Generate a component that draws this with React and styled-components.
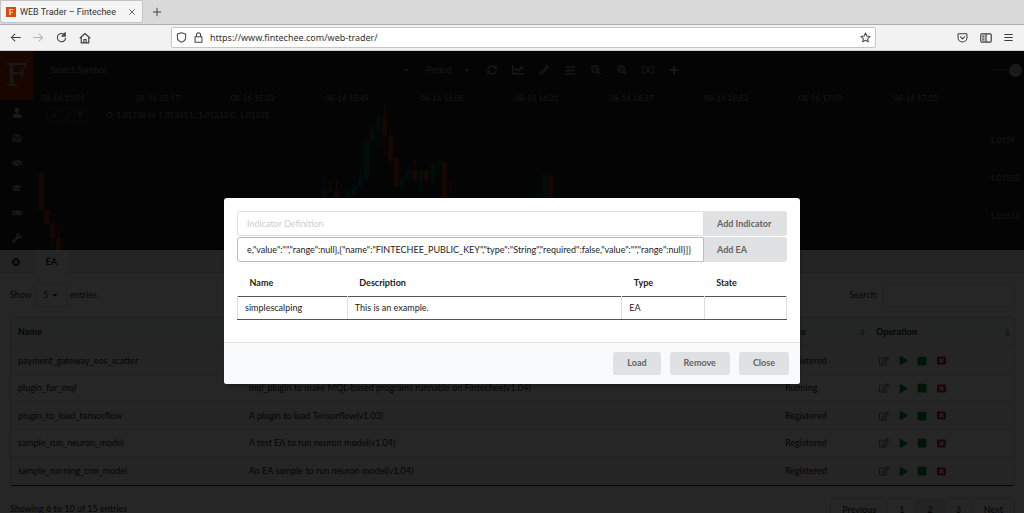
import React from "react";
import styled, { createGlobalStyle } from "styled-components";
import {
  FaUser, FaBalanceScale, FaHandshake, FaGraduationCap, FaGamepad, FaWrench,
  FaChartLine, FaPencilAlt, FaBars, FaSearchMinus, FaSearchPlus,
  FaRegMoneyBillAlt, FaPlus, FaTimesCircle, FaRegEdit, FaPlay, FaStop, FaWindowClose,
  FaSort, FaCaretDown, FaSyncAlt,
} from "react-icons/fa";

const Global = createGlobalStyle`
  *, *::before, *::after { box-sizing: border-box; }
  body { margin: 0; font: 9px/14px Lato, "Liberation Sans", sans-serif; color: #222; }
  button, input, select { font: inherit; color: inherit; margin: 0; }
  button { cursor: pointer; }
  svg { display: block; }
`;

const Screen = styled.div`
  display: flex;
  flex-direction: column;
  height: 100vh;
  overflow: hidden;
`;

/* Browser window */
const TabStrip = styled.div`
  display: flex;
  align-items: center;
  flex: none;
  height: 25px;
  background: #d9d9d9;
  border-bottom: 1px solid #adadad;
  font-family: Roboto, sans-serif;
`;
const BrowserTab = styled.div`
  display: flex;
  align-items: center;
  width: 143px;
  height: 23px;
  margin-bottom: 1px;
  padding: 0 6px 0 5px;
  gap: 4px;
  background: #f4f4f4;
  border: 1px solid #c4c4c4;
  border-radius: 0 0 3px 3px;
  color: #333;
  span { flex: 1; white-space: nowrap; }
`;
const Favicon = styled.i`
  width: 10px;
  height: 10px;
  background: #d94a0c;
  color: #fff;
  font: 9px/10px "Liberation Serif", serif;
  text-align: center;
`;
const ChromeButton = styled.button`
  display: grid;
  place-items: center;
  width: ${(p) => p.$w || 23}px;
  height: 16px;
  padding: 0;
  border: 0;
  background: none;
  color: ${(p) => (p.$faint ? "#b0b0b0" : "#3c3c3c")};
`;
const NavBar = styled.div`
  display: flex;
  align-items: center;
  flex: none;
  height: 26px;
  padding: 0 4px;
  background: #f2f2f2;
  border-bottom: 1px solid #d0d0d0;
`;
const Spacer = styled.div`
  flex: 1;
`;
const UrlBar = styled.div`
  display: flex;
  align-items: center;
  flex: 0 1 705px;
  height: 21px;
  padding: 0 4px;
  gap: 6px;
  background: #fff;
  border: 1px solid #c6c6c6;
  border-radius: 2px;
  color: #444;
  input {
    flex: 1;
    min-width: 0;
    padding: 0;
    border: 0;
    outline: 0;
    color: #333;
    font: 9px/16px "Noto Sans", sans-serif;
  }
`;

/* Trading page */
const Page = styled.main`
  position: relative;
  display: flex;
  flex-direction: column;
  flex: 1;
  min-height: 0;
  overflow: hidden;
  background: #fff;
`;
const Workspace = styled.section`
  display: flex;
  flex: none;
  height: 199px;
  background: #1b1c20;
  color: #a09a94;
`;
const SideNav = styled.nav`
  flex: none;
  width: 33px;
  background: #1b1e22;
`;
const Logo = styled.a`
  display: block;
  height: 49px;
  background: #a82c08;
  color: #a8a098;
  font: 32px/49px "DejaVu Serif", serif;
  text-align: center;
  text-decoration: none;
`;
const SideLink = styled.a`
  display: grid;
  place-items: center;
  height: 25px;
  color: #b0aaa4;
`;
const Desk = styled.div`
  flex: 1;
  min-width: 0;
`;
const ToolBar = styled.div`
  display: flex;
  align-items: center;
  height: 38px;
  padding: 0 2px 0 10px;
`;
const Picker = styled.label`
  display: flex;
  align-items: center;
  flex: ${(p) => p.$flex};
  margin-right: 8px;
  padding-left: 8px;
  select {
    flex: 1;
    appearance: none;
    padding: 0;
    border: 0;
    outline: 0;
    background: transparent;
  }
`;
const Tool = styled.button`
  display: grid;
  place-items: center;
  width: 26px;
  height: 20px;
  padding: 0;
  border: 0;
  background: none;
`;
const Volume = styled.input`
  appearance: none;
  width: 31px;
  height: 13px;
  margin-left: auto;
  background: linear-gradient(#0a4a70, #0a4a70) left center / 100% 2px no-repeat;
  &::-webkit-slider-thumb {
    appearance: none;
    width: 13px;
    height: 13px;
    border-radius: 50%;
    background: #b4b0ac;
  }
`;
const Chart = styled.div`
  position: relative;
  height: 161px;
  font-size: 8px;
  line-height: 10px;
  > svg { position: absolute; inset: 0; width: 100%; height: 100%; }
`;
const TimeAxis = styled.div`
  display: grid;
  grid-template-columns: repeat(10, 1fr);
  padding: 4px 0 4px 8px;
  margin-right: 36px;
`;
const Plot = styled.div`
  display: flex;
  justify-content: space-between;
`;
const Legend = styled.div`
  display: flex;
  align-items: center;
  height: 15px;
  padding-left: 14px;
  gap: 18px;
`;
const LegendTools = styled.div`
  display: flex;
  border: 1px solid #3a3b3f;
  button {
    width: 13px;
    height: 12px;
    padding: 0;
    border: 0;
    background: none;
    line-height: 10px;
  }
  button + button { border-left: 1px solid #3a3b3f; }
`;
const PriceAxis = styled.div`
  display: flex;
  flex-direction: column;
  gap: 28px;
  width: 34px;
  padding-top: 28px;
`;

const Panel = styled.section`
  flex: 1;
  min-height: 0;
  color: #1c1c1c;
`;
const PanelTabs = styled.div`
  display: flex;
  height: 23px;
  background: #eee;
  border-bottom: 1px solid #d0d0d0;
`;
const PanelTab = styled.button`
  display: grid;
  place-items: center;
  width: ${(p) => (p.$active ? 31 : 36)}px;
  height: 23px;
  padding: 0 ${(p) => (p.$active ? 0 : 4)}px 0 0;
  border: 0;
  background: ${(p) => (p.$active ? "#fff" : "transparent")};
  font-weight: 700;
`;
const PanelBody = styled.div`
  padding: 10px 9px 0 10px;
`;
const Controls = styled.div`
  display: flex;
  align-items: center;
  justify-content: space-between;
  margin-bottom: 10px;
  label { display: flex; align-items: center; gap: 2px; }
`;
const LengthBox = styled.span`
  display: flex;
  align-items: center;
  width: 34px;
  height: 24px;
  padding: 0 8px;
  border: 1px solid #ddd;
  border-radius: 3px;
  select {
    flex: 1;
    width: 8px;
    appearance: none;
    padding: 0;
    border: 0;
    background: none;
  }
`;
const SearchInput = styled.input`
  width: 132px;
  height: 24px;
  margin-left: 3px;
  border: 1px solid #ddd;
  border-radius: 3px;
`;
const Programs = styled.table`
  width: 100%;
  table-layout: fixed;
  border-spacing: 0;
  border: 1px solid #d6d6d6;
  border-bottom: 1px solid #222;
  border-radius: 3px;
  th {
    height: 29px;
    padding: 0 7px;
    background: #f0f5f5;
    text-align: left;
    border-bottom: 1px solid #ddd;
  }
  td {
    height: 28px;
    padding: 0 7px;
    border-bottom: 1px solid #e4e4e4;
  }
  tr:nth-child(even) td { height: 27px; }
  tr:nth-child(odd) td { background: #f4f4f4; }
  tr:last-child td { border-bottom: 0; }
`;
const Col = styled.col`
  width: ${(p) => p.$w};
`;
const Heading = styled.span`
  display: flex;
  justify-content: space-between;
  align-items: center;
  svg { color: #a8aaaa; margin-right: -5px; }
`;
const Actions = styled.span`
  display: flex;
  padding-left: 2px;
  gap: 7px;
`;
const Action = styled.button`
  display: grid;
  place-items: center;
  width: 12px;
  height: 12px;
  padding: 0;
  border: 0;
  background: none;
  color: ${(p) => p.$color};
`;
const PanelFoot = styled.div`
  display: flex;
  justify-content: space-between;
  padding-top: 12px;
  line-height: 22px;
`;
const Pager = styled.nav`
  display: flex;
  border: 1px solid #e4e4e4;
  border-radius: 3px;
`;
const PageButton = styled.button`
  height: 22px;
  padding: 0 11px;
  border: 0;
  border-left: 1px solid #e4e4e4;
  background: ${(p) => (p.$active ? "#e6e6e6" : "none")};
  &:first-child { border-left: 0; }
`;

/* Dialog */
const Dimmer = styled.div`
  position: absolute;
  inset: 0;
  display: flex;
  justify-content: center;
  align-items: flex-start;
  padding: 147px 16px 0;
  background: rgba(0, 0, 0, 0.85);
`;
const Dialog = styled.div`
  width: 576px;
  max-width: 100%;
  overflow: hidden;
  background: #fff;
  border-radius: 3px;
  box-shadow: 1px 3px 3px rgba(0, 0, 0, 0.2);
`;
const DialogBody = styled.div`
  padding: 13px 13px 22px;
`;
const Field = styled.div`
  display: flex;
  height: 25px;
  margin-bottom: 1px;
`;
const FieldInput = styled.input`
  flex: 1;
  min-width: 0;
  padding: 0 9px;
  border: 1px solid ${(p) => (p.$focused ? "#98c8e8" : "#dedede")};
  border-radius: 3px 0 0 3px;
  outline: 0;
  color: #222;
  &::placeholder { color: #cdcdcd; }
`;
const Button = styled.button`
  width: ${(p) => (p.$addon ? "83px" : "auto")};
  height: ${(p) => (p.$addon ? 25 : 23)}px;
  padding: 0 ${(p) => (p.$addon ? 13 : 14)}px;
  border: 0;
  border-radius: ${(p) => (p.$addon ? "0 3px 3px 0" : "3px")};
  background: #e0e1e2;
  color: #636464;
  font-weight: 700;
  text-align: left;
  white-space: nowrap;
`;
const Loaded = styled.table`
  width: 100%;
  margin-top: 9px;
  table-layout: fixed;
  border-collapse: collapse;
  th { height: 25px; padding: 0 12px; text-align: left; }
  td {
    height: 23px;
    padding: 0 7px;
    border: 1px solid #ddd;
    border-top-color: #555;
    border-bottom-color: #555;
  }
`;
const DialogFoot = styled.div`
  display: flex;
  justify-content: flex-end;
  gap: 9px;
  padding: 9px 11px;
  background: #f9fafb;
  border-top: 1px solid #dedfdf;
`;

const Line = ({ size = 12, children }) => (
  <svg width={size} height={size} viewBox="0 0 16 16" fill="none" stroke="currentColor"
    strokeWidth="1.5" strokeLinecap="round" strokeLinejoin="round">{children}</svg>
);

const times = ["15:01", "15:17", "15:33", "15:49", "16:05", "16:21", "16:37", "16:53", "17:09", "17:25"];

/* x, body top, body bottom, wick top, wick bottom, rising */
const candles = [
  [9, 84, 121, 82, 121, 0], [14, 121, 135, 121, 136, 0], [20, 135, 149, 133, 157, 0], [26, 149, 161, 137, 161, 0],
  [292, 101, 109, 82, 109, 1], [298, 100, 102, 91, 103, 0], [304, 101, 109, 91, 109, 0],
  [316, 104, 109, 99, 109, 1], [322, 98, 106, 85, 106, 1], [328, 88, 97, 78, 98, 1], [334, 51, 88, 46, 92, 1],
  [340, 42, 51, 36, 56, 1], [346, 28, 41, 22, 59, 1], [352, 28, 46, 15, 66, 0], [358, 46, 71, 38, 76, 0],
  [364, 69, 97, 68, 99, 0], [370, 90, 97, 86, 103, 1], [376, 81, 90, 77, 92, 1], [382, 81, 92, 71, 93, 0],
  [388, 82, 92, 81, 107, 1], [394, 81, 91, 80, 95, 0], [400, 76, 92, 74, 96, 1], [406, 72, 76, 72, 87, 1],
  [412, 73, 120, 72, 124, 0], [418, 118, 128, 91, 130, 0], [506, 104, 110, 103, 112, 1], [512, 86, 108, 85, 110, 1],
  [518, 87, 112, 86, 114, 0],
];

const programs = [
  ["payment_gateway_eos_scatter", "A plugin to pay via EOS Scatter(v1.02)", "Registered"],
  ["plugin_for_mql", "mql_plugin to make MQL-based programs runnable on Fintechee(v1.04)", "Running"],
  ["plugin_to_load_tensorflow", "A plugin to load Tensorflow(v1.03)", "Registered"],
  ["sample_run_neuron_model", "A test EA to run neuron model(v1.04)", "Registered"],
  ["sample_running_cnn_model", "An EA sample to run neuron model(v1.04)", "Registered"],
];

const sideItems = [["Account", FaUser], ["Balance", FaBalanceScale], ["Deals", FaHandshake],
  ["Learn", FaGraduationCap], ["Games", FaGamepad], ["Settings", FaWrench]];
const tools = [["Refresh", FaSyncAlt], ["Chart", FaChartLine, 12], ["Draw", FaPencilAlt], ["List", FaBars, 11],
  ["Zoom out", FaSearchMinus], ["Zoom in", FaSearchPlus], ["Trade", FaRegMoneyBillAlt, 12], ["Add", FaPlus]];

const definition = 'e,"value":"","range":null},{"name":"FINTECHEE_PUBLIC_KEY","type":"String","required":false,"value":"","range":null}]}';

function Browser() {
  return (
    <>
      <TabStrip>
        <BrowserTab>
          <Favicon>F</Favicon>
          <span>WEB Trader – Fintechee</span>
          <ChromeButton $w={9} aria-label="Close tab"><Line size={8}><path d="M3 3l10 10M13 3L3 13" /></Line></ChromeButton>
        </BrowserTab>
        <ChromeButton $w={27} aria-label="New tab"><Line size={10}><path d="M8 2v12M2 8h12" /></Line></ChromeButton>
      </TabStrip>
      <NavBar>
        <ChromeButton aria-label="Back"><Line size={11}><path d="M15 8H2M7 3L2 8l5 5" /></Line></ChromeButton>
        <ChromeButton $faint aria-label="Forward"><Line size={11}><path d="M1 8h13M9 3l5 5-5 5" /></Line></ChromeButton>
        <ChromeButton aria-label="Reload"><Line size={11}><path d="M14 9A6 6 0 1 1 12.500 4.200M13.500 1v5H8.500z" /></Line></ChromeButton>
        <ChromeButton aria-label="Home"><Line size={12}><path d="M1.500 8L8 2l6.500 6M3 7v7.500h10V7M6.500 14V10h3v4" /></Line></ChromeButton>
        <Spacer />
        <UrlBar>
          <Line size={11}><path d="M8 1l6 2v5c0 3-2 5.500-6 7-4-1.500-6-4-6-7V3z" /></Line>
          <Line size={11}><path d="M3 7h10v8H3zM5 7V4a3 3 0 0 1 6 0v3" /></Line>
          <input aria-label="Address" defaultValue="https://www.fintechee.com/web-trader/" />
          <Line size={11}><path d="M8 1.500l2 4.300 4.700.6-3.500 3.200.9 4.700L8 12l-4.100 2.300.9-4.700L1.300 6.400 6 5.800z" /></Line>
        </UrlBar>
        <Spacer />
        <ChromeButton aria-label="Save to Pocket"><Line size={11}><path d="M2.500 2.500h11q1 0 1 1V8a6.500 6.500 0 0 1-13 0V3.500q0-1 1-1zM5 7l3 3 3-3" /></Line></ChromeButton>
        <ChromeButton aria-label="Sidebar"><Line size={12}><path d="M2.500 2.500h11q1.500 0 1.500 1.500v8q0 1.500-1.500 1.500h-11Q1 13.500 1 12V4q0-1.500 1.500-1.500zM8 3v10M3.500 5.500h2M3.500 8h2M3.500 10.500h2" /></Line></ChromeButton>
        <ChromeButton aria-label="Menu"><Line size={11}><path d="M2.500 3.500h11M2.500 8h11M2.500 12.500h11" /></Line></ChromeButton>
      </NavBar>
    </>
  );
}

function TradingDesk() {
  return (
    <Workspace>
      <SideNav>
        <Logo href="#">F</Logo>
        {sideItems.map(([name, Icon]) => <SideLink key={name} href="#" aria-label={name}><Icon size={10} /></SideLink>)}
      </SideNav>
      <Desk>
        <ToolBar>
          <Picker $flex="0 1 367px"><select aria-label="Symbol"><option>Select Symbol</option></select><FaCaretDown size={8} /></Picker>
          <Picker $flex="0 0 53px"><select aria-label="Period"><option>Period</option></select><FaCaretDown size={8} /></Picker>
          {tools.map(([name, Icon, size = 10]) => <Tool key={name} aria-label={name}><Icon size={size} /></Tool>)}
          <Volume type="range" aria-label="Level" defaultValue="100" />
        </ToolBar>
        <Chart>
          <svg aria-hidden="true">
            {candles.map(([x, top, bottom, high, low, up]) => (
              <g key={x} fill={up ? "#0e5a4c" : "#90300e"}>
                <rect x={x - 3} y={top} width="5" height={bottom - top} />
                <rect x={x - 1} y={high} width="1" height={low - high} />
              </g>
            ))}
          </svg>
          <TimeAxis>{times.map((t) => <span key={t}>08-16 {t}</span>)}</TimeAxis>
          <Plot>
            <Legend>
              <LegendTools><button>+</button><button>/</button><button>F</button></LegendTools>
              <span>O: 1.01336 H: 1.01345 L: 1.01333 C: 1.01335</span>
            </Legend>
            <PriceAxis><span>1.0159</span><span>1.01552</span><span>1.01514</span></PriceAxis>
          </Plot>
        </Chart>
      </Desk>
    </Workspace>
  );
}

function ProgramPanel() {
  return (
    <Panel>
      <PanelTabs>
        <PanelTab aria-label="Close panel"><FaTimesCircle size={8} /></PanelTab>
        <PanelTab $active>EA</PanelTab>
      </PanelTabs>
      <PanelBody>
        <Controls>
          <label>Show <LengthBox><select><option>5</option></select><FaCaretDown size={8} /></LengthBox> entries</label>
          <label>Search: <SearchInput /></label>
        </Controls>
        <Programs>
          <colgroup><Col $w="23%" /><Col /><Col $w="91px" /><Col $w="145px" /></colgroup>
          <thead>
            <tr>{["Name", "Description", "State", "Operation"].map((h) => (
              <th key={h}><Heading>{h}<FaSort size={9} /></Heading></th>
            ))}</tr>
          </thead>
          <tbody>
            {programs.map(([name, text, state]) => (
              <tr key={name}>
                <td>{name}</td><td>{text}</td><td>{state}</td>
                <td>
                  <Actions>
                    <Action $color="#606060" aria-label="Edit"><FaRegEdit size={10} /></Action>
                    <Action $color="#0b8f2c" aria-label="Run"><FaPlay size={9} /></Action>
                    <Action $color="#0b8f2c" aria-label="Stop"><FaStop size={10} /></Action>
                    <Action $color="#c82020" aria-label="Remove"><FaWindowClose size={9} /></Action>
                  </Actions>
                </td>
              </tr>
            ))}
          </tbody>
        </Programs>
        <PanelFoot>
          <span>Showing 6 to 10 of 15 entries</span>
          <Pager>
            {["Previous", "1", "2", "3", "Next"].map((p) => <PageButton key={p} $active={p === "2"}>{p}</PageButton>)}
          </Pager>
        </PanelFoot>
      </PanelBody>
    </Panel>
  );
}

function LoadDialog() {
  return (
    <Dimmer>
      <Dialog role="dialog" aria-label="Programs">
        <DialogBody>
          <Field><FieldInput aria-label="Indicator" placeholder="Indicator Definition" /><Button $addon>Add Indicator</Button></Field>
          <Field><FieldInput $focused aria-label="EA" defaultValue={definition} /><Button $addon>Add EA</Button></Field>
          <Loaded>
            <colgroup><Col $w="20%" /><Col $w="50%" /><Col $w="15%" /><Col $w="15%" /></colgroup>
            <thead><tr><th>Name</th><th>Description</th><th>Type</th><th>State</th></tr></thead>
            <tbody><tr><td>simplescalping</td><td>This is an example.</td><td>EA</td><td /></tr></tbody>
          </Loaded>
        </DialogBody>
        <DialogFoot><Button>Load</Button><Button>Remove</Button><Button>Close</Button></DialogFoot>
      </Dialog>
    </Dimmer>
  );
}

export default function App() {
  return (
    <Screen>
      <Global />
      <Browser />
      <Page>
        <TradingDesk />
        <ProgramPanel />
        <LoadDialog />
      </Page>
    </Screen>
  );
}
